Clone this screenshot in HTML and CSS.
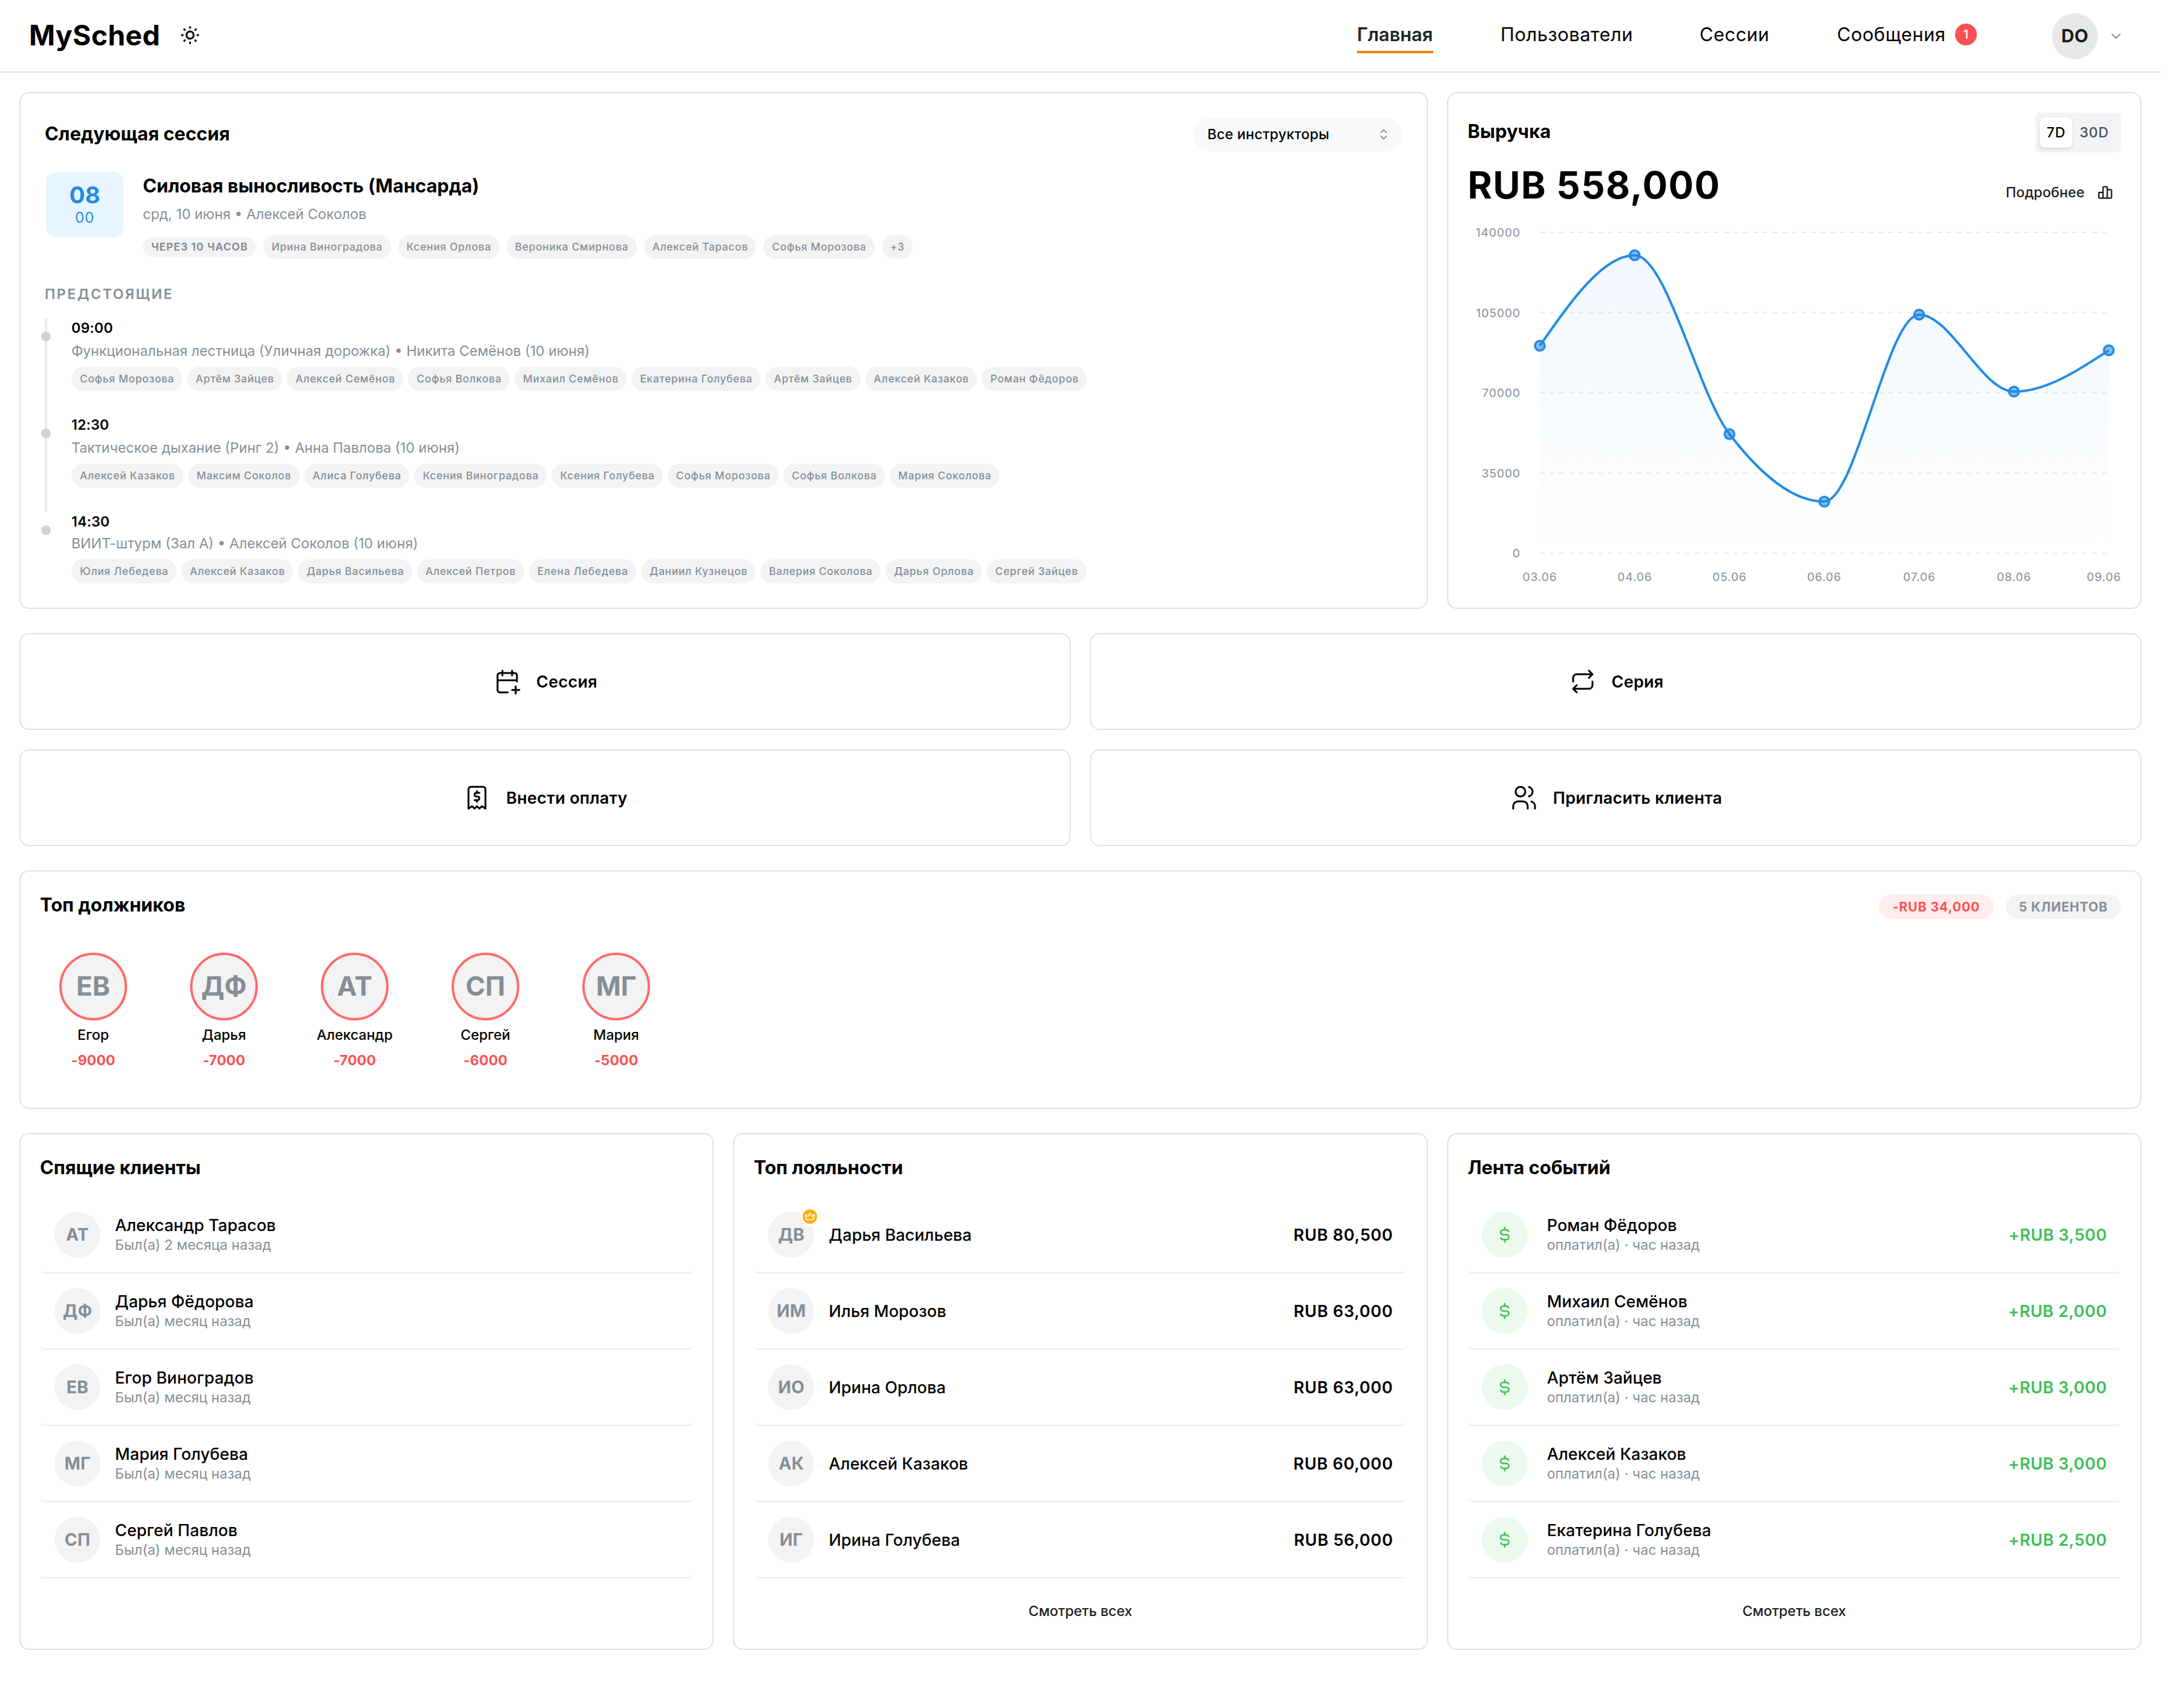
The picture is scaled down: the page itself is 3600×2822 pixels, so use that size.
FILE: index.html
```html
<!DOCTYPE html>
<html lang="ru">
<head>
<meta charset="utf-8">
<title>MySched</title>
<link rel="stylesheet" href="styles.css">
</head>
<body>
<div class="page">
  <header class="header">
    <div class="brand">
      <span class="logo">MySched</span>
      <svg class="icon sun" viewBox="0 0 24 24"><path d="M8 12a4 4 0 1 0 8 0a4 4 0 1 0 -8 0M3 12h1m8 -9v1m8 8h1m-9 8v1m-6.4 -15.4l.7 .7m12.1 -.7l-.7 .7m0 11.4l.7 .7m-12.1 -.7l-.7 .7"/></svg>
    </div>
    <nav class="nav">
      <a class="nav-item active">Главная</a>
      <a class="nav-item users">Пользователи</a>
      <a class="nav-item sessions">Сессии</a>
      <a class="nav-item messages">Сообщения <span class="count">1</span></a>
    </nav>
    <div class="account">
      <span class="account-avatar">DO</span>
      <svg class="chevron" viewBox="0 0 16 10"><path d="M1.5 1.5l6.5 6.5l6.5 -6.5"/></svg>
    </div>
  </header>

  <main class="main">
    <section class="card next">
      <div class="next-head">
        <h2 class="title">Следующая сессия</h2>
        <div class="select"><span>Все инструкторы</span>
          <svg class="selector" viewBox="0 0 12 18"><path d="M1.5 6l4.5 -4.5l4.5 4.5M1.5 12l4.5 4.5l4.5 -4.5"/></svg>
        </div>
      </div>
      <div class="session">
        <div class="tile"><span class="tile-hour">08</span><span class="tile-min">00</span></div>
        <div class="session-body">
          <h3 class="session-title">Силовая выносливость (Мансарда)</h3>
          <p class="meta session-meta">срд, 10 июня • Алексей Соколов</p>
          <div class="chips wide">
            <span class="chip soon">ЧЕРЕЗ 10 ЧАСОВ</span><span class="chip">Ирина Виноградова</span><span class="chip">Ксения Орлова</span><span class="chip">Вероника Смирнова</span><span class="chip">Алексей Тарасов</span><span class="chip">Софья Морозова</span><span class="chip">+3</span>
          </div>
        </div>
      </div>
      <h4 class="upcoming">ПРЕДСТОЯЩИЕ</h4>
      <ol class="timeline">
        <li class="event">
          <span class="rail"></span>
          <div>
            <p class="time">09:00</p>
            <p class="meta">Функциональная лестница (Уличная дорожка) • Никита Семёнов (10 июня)</p>
            <div class="chips">
              <span class="chip">Софья Морозова</span><span class="chip">Артём Зайцев</span><span class="chip">Алексей Семёнов</span><span class="chip">Софья Волкова</span><span class="chip">Михаил Семёнов</span><span class="chip">Екатерина Голубева</span><span class="chip">Артём Зайцев</span><span class="chip">Алексей Казаков</span><span class="chip">Роман Фёдоров</span>
            </div>
          </div>
        </li>
        <li class="event">
          <span class="rail"></span>
          <div>
            <p class="time">12:30</p>
            <p class="meta">Тактическое дыхание (Ринг 2) • Анна Павлова (10 июня)</p>
            <div class="chips">
              <span class="chip">Алексей Казаков</span><span class="chip">Максим Соколов</span><span class="chip">Алиса Голубева</span><span class="chip">Ксения Виноградова</span><span class="chip">Ксения Голубева</span><span class="chip">Софья Морозова</span><span class="chip">Софья Волкова</span><span class="chip">Мария Соколова</span>
            </div>
          </div>
        </li>
        <li class="event last">
          <span class="rail"></span>
          <div>
            <p class="time">14:30</p>
            <p class="meta">ВИИТ-штурм (Зал А) • Алексей Соколов (10 июня)</p>
            <div class="chips">
              <span class="chip">Юлия Лебедева</span><span class="chip">Алексей Казаков</span><span class="chip">Дарья Васильева</span><span class="chip">Алексей Петров</span><span class="chip">Елена Лебедева</span><span class="chip">Даниил Кузнецов</span><span class="chip">Валерия Соколова</span><span class="chip">Дарья Орлова</span><span class="chip">Сергей Зайцев</span>
            </div>
          </div>
        </li>
      </ol>
    </section>

    <section class="card revenue">
      <div class="revenue-head">
        <h2 class="title">Выручка</h2>
        <div class="segmented"><span class="segment on">7D</span><span class="segment">30D</span></div>
      </div>
      <div class="revenue-total">
        <strong class="sum">RUB 558,000</strong>
        <a class="more">Подробнее
          <svg class="icon bars" viewBox="0 0 24 24"><path d="M3 13a1 1 0 0 1 1 -1h4a1 1 0 0 1 1 1v6a1 1 0 0 1 -1 1h-4a1 1 0 0 1 -1 -1zM15 9a1 1 0 0 1 1 -1h4a1 1 0 0 1 1 1v10a1 1 0 0 1 -1 1h-4a1 1 0 0 1 -1 -1zM9 5a1 1 0 0 1 1 -1h4a1 1 0 0 1 1 1v14a1 1 0 0 1 -1 1h-4a1 1 0 0 1 -1 -1zM4 20h14"/></svg>
        </a>
      </div>
      <svg class="chart" viewBox="0 0 1080 608">
        <defs>
          <linearGradient id="area" x1="0" y1="0" x2="0" y2="1">
            <stop offset="0" stop-color="#228be6" stop-opacity=".065"/>
            <stop offset="1" stop-color="#228be6" stop-opacity="0"/>
          </linearGradient>
        </defs>
        <g class="grid-lines"><path d="M120 20H1060M120 152.5H1060M120 285H1060M120 417.5H1060M120 550H1060"/></g>
        <path fill="url(#area)" d="M120,207.25C172.2,132.5 224.4,57.7 276.67,57.7C328.9,57.7 381.1,285.3 433.33,353.2C485.6,421.1 537.8,464.8 590,464.8C642.2,464.8 694.4,155.9 746.67,155.9C798.9,155.9 851.1,283.1 903.33,283.1C955.6,283.1 1007.8,248.95 1060,214.8V550H120Z"/>
        <path class="line" d="M120,207.25C172.2,132.5 224.4,57.7 276.67,57.7C328.9,57.7 381.1,285.3 433.33,353.2C485.6,421.1 537.8,464.8 590,464.8C642.2,464.8 694.4,155.9 746.67,155.9C798.9,155.9 851.1,283.1 903.33,283.1C955.6,283.1 1007.8,248.95 1060,214.8"/>
        <g class="dots">
          <circle cx="120" cy="207.25" r="8"/><circle cx="276.67" cy="57.7" r="8"/><circle cx="433.33" cy="353.2" r="8"/><circle cx="590" cy="464.8" r="8"/><circle cx="746.67" cy="155.9" r="8"/><circle cx="903.33" cy="283.1" r="8"/><circle cx="1060" cy="214.8" r="8"/>
        </g>
        <g class="axis y-axis">
          <text x="88" y="27">140000</text><text x="88" y="159.5">105000</text><text x="88" y="292">70000</text><text x="88" y="424.5">35000</text><text x="88" y="557">0</text>
        </g>
        <g class="axis x-axis">
          <text x="120" y="596">03.06</text><text x="277" y="596">04.06</text><text x="433.5" y="596">05.06</text><text x="590" y="596">06.06</text><text x="747" y="596">07.06</text><text x="903.5" y="596">08.06</text><text x="1052" y="596">09.06</text>
        </g>
      </svg>
    </section>

    <section class="actions">
      <button class="card action"><svg class="icon action-icon" viewBox="0 0 24 24"><path d="M12.5 21h-6.5a2 2 0 0 1 -2 -2v-12a2 2 0 0 1 2 -2h12a2 2 0 0 1 2 2v5M16 3v4M8 3v4M4 11h16M16 19h6M19 16v6"/></svg><span>Сессия</span></button>
      <button class="card action"><svg class="icon action-icon" viewBox="0 0 24 24"><path d="M4 12v-3a3 3 0 0 1 3 -3h13m-3 -3l3 3l-3 3M20 12v3a3 3 0 0 1 -3 3h-13m3 3l-3 -3l3 -3"/></svg><span>Серия</span></button>
      <button class="card action"><svg class="icon action-icon" viewBox="0 0 24 24"><path d="M5 21v-16a2 2 0 0 1 2 -2h10a2 2 0 0 1 2 2v16l-3 -2l-2 2l-2 -2l-2 2l-2 -2l-3 2M14 8h-2.5a1.5 1.5 0 0 0 0 3h1a1.5 1.5 0 0 1 0 3h-2.5m2 0v1.5m0 -9v1.5"/></svg><span>Внести оплату</span></button>
      <button class="card action"><svg class="icon action-icon" viewBox="0 0 24 24"><path d="M5 7a4 4 0 1 0 8 0a4 4 0 1 0 -8 0M3 21v-2a4 4 0 0 1 4 -4h4a4 4 0 0 1 4 4v2M16 3.13a4 4 0 0 1 0 7.75M21 21v-2a4 4 0 0 0 -3 -3.85"/></svg><span>Пригласить клиента</span></button>
    </section>

    <section class="card debtors">
      <div class="debtors-head">
        <h2 class="title">Топ должников</h2>
        <div class="pills"><span class="pill red">-RUB 34,000</span><span class="pill">5 КЛИЕНТОВ</span></div>
      </div>
      <div class="debtor-list">
        <div class="debtor"><span class="ring">ЕВ</span><span class="debtor-name">Егор</span><span class="debt">-9000</span></div>
        <div class="debtor"><span class="ring">ДФ</span><span class="debtor-name">Дарья</span><span class="debt">-7000</span></div>
        <div class="debtor"><span class="ring">АТ</span><span class="debtor-name">Александр</span><span class="debt">-7000</span></div>
        <div class="debtor"><span class="ring">СП</span><span class="debtor-name">Сергей</span><span class="debt">-6000</span></div>
        <div class="debtor"><span class="ring">МГ</span><span class="debtor-name">Мария</span><span class="debt">-5000</span></div>
      </div>
    </section>

    <section class="card list">
      <h2 class="title">Спящие клиенты</h2>
      <ul class="rows">
        <li class="row"><span class="avatar">АТ</span><div class="who"><b>Александр Тарасов</b><small>Был(а) 2 месяца назад</small></div></li>
        <li class="row"><span class="avatar">ДФ</span><div class="who"><b>Дарья Фёдорова</b><small>Был(а) месяц назад</small></div></li>
        <li class="row"><span class="avatar">ЕВ</span><div class="who"><b>Егор Виноградов</b><small>Был(а) месяц назад</small></div></li>
        <li class="row"><span class="avatar">МГ</span><div class="who"><b>Мария Голубева</b><small>Был(а) месяц назад</small></div></li>
        <li class="row"><span class="avatar">СП</span><div class="who"><b>Сергей Павлов</b><small>Был(а) месяц назад</small></div></li>
      </ul>
    </section>

    <section class="card list loyal">
      <h2 class="title">Топ лояльности</h2>
      <ul class="rows">
        <li class="row"><span class="avatar">ДВ<span class="crown"><svg viewBox="0 0 24 24"><path d="M12 6l4 6l5 -4l-2 10h-14l-2 -10l5 4z"/></svg></span></span><b>Дарья Васильева</b><span class="amount">RUB 80,500</span></li>
        <li class="row"><span class="avatar">ИМ</span><b>Илья Морозов</b><span class="amount">RUB 63,000</span></li>
        <li class="row"><span class="avatar">ИО</span><b>Ирина Орлова</b><span class="amount">RUB 63,000</span></li>
        <li class="row"><span class="avatar">АК</span><b>Алексей Казаков</b><span class="amount">RUB 60,000</span></li>
        <li class="row"><span class="avatar">ИГ</span><b>Ирина Голубева</b><span class="amount">RUB 56,000</span></li>
      </ul>
      <a class="all">Смотреть всех</a>
    </section>

    <section class="card list feed">
      <h2 class="title">Лента событий</h2>
      <ul class="rows">
        <li class="row"><span class="avatar paid"><svg class="icon" viewBox="0 0 24 24"><path d="M16.7 8a3 3 0 0 0 -2.7 -2h-4a3 3 0 0 0 0 6h4a3 3 0 0 1 0 6h-4a3 3 0 0 1 -2.7 -2M12 3v3m0 12v3"/></svg></span><div class="who"><b>Роман Фёдоров</b><small>оплатил(а) · час назад</small></div><span class="amount">+RUB 3,500</span></li>
        <li class="row"><span class="avatar paid"><svg class="icon" viewBox="0 0 24 24"><path d="M16.7 8a3 3 0 0 0 -2.7 -2h-4a3 3 0 0 0 0 6h4a3 3 0 0 1 0 6h-4a3 3 0 0 1 -2.7 -2M12 3v3m0 12v3"/></svg></span><div class="who"><b>Михаил Семёнов</b><small>оплатил(а) · час назад</small></div><span class="amount">+RUB 2,000</span></li>
        <li class="row"><span class="avatar paid"><svg class="icon" viewBox="0 0 24 24"><path d="M16.7 8a3 3 0 0 0 -2.7 -2h-4a3 3 0 0 0 0 6h4a3 3 0 0 1 0 6h-4a3 3 0 0 1 -2.7 -2M12 3v3m0 12v3"/></svg></span><div class="who"><b>Артём Зайцев</b><small>оплатил(а) · час назад</small></div><span class="amount">+RUB 3,000</span></li>
        <li class="row"><span class="avatar paid"><svg class="icon" viewBox="0 0 24 24"><path d="M16.7 8a3 3 0 0 0 -2.7 -2h-4a3 3 0 0 0 0 6h4a3 3 0 0 1 0 6h-4a3 3 0 0 1 -2.7 -2M12 3v3m0 12v3"/></svg></span><div class="who"><b>Алексей Казаков</b><small>оплатил(а) · час назад</small></div><span class="amount">+RUB 3,000</span></li>
        <li class="row"><span class="avatar paid"><svg class="icon" viewBox="0 0 24 24"><path d="M16.7 8a3 3 0 0 0 -2.7 -2h-4a3 3 0 0 0 0 6h4a3 3 0 0 1 0 6h-4a3 3 0 0 1 -2.7 -2M12 3v3m0 12v3"/></svg></span><div class="who"><b>Екатерина Голубева</b><small>оплатил(а) · час назад</small></div><span class="amount">+RUB 2,500</span></li>
      </ul>
      <a class="all">Смотреть всех</a>
    </section>
  </main>
</div>
</body>
</html>
```
FILE: styles.css
```css
* { box-sizing: border-box; margin: 0; padding: 0; }

body {
  background: #fff;
  color: #000;
  font-family: Inter, "Noto Sans", sans-serif;
  font-size: 23.1px;
  line-height: 30px;
}

ul, ol { list-style: none; }
.page { width: 3570px; height: 2822px; }

.icon {
  display: block;
  flex: none;
  fill: none;
  stroke: currentColor;
  stroke-width: 2;
  stroke-linecap: round;
  stroke-linejoin: round;
}

/* Header */
.header {
  display: flex;
  align-items: center;
  height: 120px;
  padding: 0 66px 0 48px;
  border-bottom: 2px solid #dee2e6;
}
.brand { display: flex; align-items: center; gap: 30px; margin-right: auto; padding-bottom: 2px; }
.logo { width: 218px; font-size: 46.2px; font-weight: 700; line-height: 60px; letter-spacing: .008em; }
.sun { width: 36px; height: 36px; }
.nav { display: flex; gap: 111px; margin-bottom: 2px; }
.nav-item {
  display: flex;
  align-items: center;
  height: 60px;
  padding-top: 2px;
  border-bottom: 4px solid transparent;
  font-size: 30.8px;
  letter-spacing: .018em;
  white-space: nowrap;
}
.nav-item.active { width: 126px; border-color: #fd7e14; color: #212529; font-weight: 600; letter-spacing: -.002em; }
.users { width: 218px; }
.sessions { width: 116px; }
.messages { width: 231px; }
.count {
  width: 36px;
  height: 36px;
  margin: 0 0 0 auto;
  border-radius: 50%;
  background: #fa5252;
  color: #fff;
  font-size: 20px;
  font-weight: 500;
  line-height: 36px;
  text-align: center;
  letter-spacing: 0;
}
.account { display: flex; align-items: center; gap: 22px; margin: 2px 0 0 124px; }
.account-avatar {
  width: 76px;
  height: 76px;
  border-radius: 50%;
  background: #e7e9e9;
  color: #1a1c1e;
  font-size: 29.6px;
  font-weight: 700;
  line-height: 74px;
  text-align: center;
  letter-spacing: .01em;
}
.chevron { width: 16px; height: 10px; fill: none; stroke: #868e96; stroke-width: 2; stroke-linecap: round; stroke-linejoin: round; }

/* Page grid */
.main {
  display: grid;
  grid-template-columns: repeat(3, 1fr);
  grid-template-rows: 854px 352px 394px 854px;
  gap: 40px 32px;
  padding: 32px;
}
.card { min-width: 0; border: 2px solid #dee2e6; border-radius: 16px; background: #fff; }
.title { font-size: 30.8px; font-weight: 700; line-height: 46px; letter-spacing: 0; }
.meta { color: #868e96; white-space: nowrap; }

/* Next session */
.next { grid-column: span 2; padding: 40px; }
.next-head { display: flex; justify-content: space-between; align-items: center; height: 56px; }
.next-head .title { padding-bottom: 2px; }
.select {
  display: flex;
  align-items: center;
  justify-content: space-between;
  width: 346px;
  height: 56px;
  padding: 0 25px 0 24px;
  border-radius: 28px;
  background: #f8f9fa;
  font-weight: 500;
  letter-spacing: .0134em;
}
.selector { width: 12px; height: 18px; fill: none; stroke: #868e96; stroke-width: 1.8; stroke-linecap: round; stroke-linejoin: round; }
.session { display: flex; align-items: flex-start; gap: 32px; margin-top: 34px; padding-left: 2px; }
.tile {
  display: flex;
  flex-direction: column;
  align-items: center;
  width: 128px;
  height: 108px;
  padding-top: 16px;
  border-radius: 16px;
  background: #e7f5ff;
  color: #228be6;
}
.tile-hour { font-size: 38.5px; font-weight: 700; line-height: 44px; }
.tile-min { font-size: 24px; line-height: 32px; letter-spacing: .04em; }
.session-title { font-size: 30.8px; font-weight: 700; line-height: 45px; letter-spacing: -.001em; }
.session-meta { margin-top: 10px; }
.chips { display: flex; align-items: center; gap: 8px; margin-top: 11px; }
.chips.wide { gap: 12px; margin-top: 19px; }
.chip {
  height: 40px;
  padding: 0 13.4px 0 14px;
  border-radius: 20px;
  background: #f3f3f3;
  color: #868e96;
  font-size: 17.3px;
  font-weight: 500;
  line-height: 40px;
  letter-spacing: .0415em;
  white-space: nowrap;
}
.chip.soon { height: 32px; line-height: 32px; font-weight: 700; letter-spacing: .0616em; padding: 0 13px 0 14px; }
.upcoming { margin-top: 43px; color: #868e96; font-size: 23.1px; font-weight: 600; line-height: 30px; letter-spacing: .11em; }
.timeline { margin-top: 25px; }
.event { display: flex; gap: 40px; height: 160px; }
.rail { position: relative; width: 4px; background: #e9ecef; }
.rail::after {
  content: "";
  position: absolute;
  left: -6px;
  top: 22px;
  width: 16px;
  height: 16px;
  border-radius: 50%;
  background: #ced4d6;
}
.time { padding-top: 1px; font-weight: 600; letter-spacing: .007em; }
.event .meta { margin-top: 8px; }
.event.last { height: 118px; }
.event.last .rail { background: none; }
.event.last .meta { margin-top: 6px; }

/* Revenue */
.revenue { padding: 32px; }
.revenue-head { display: flex; justify-content: space-between; height: 66px; }
.revenue-head .title { line-height: 62px; letter-spacing: .005em; }
.segmented { display: flex; padding: 8px; border-radius: 8px; background: #f1f3f5; }
.segment { width: 72px; color: #495057; font-weight: 500; line-height: 50px; text-align: center; letter-spacing: .035em; }
.segment.on { width: 54px; border-radius: 8px; background: #fff; color: #000; box-shadow: 0 2px 4px rgba(0, 0, 0, .14); }
.revenue-total { display: flex; justify-content: space-between; height: 107px; }
.sum { font-size: 61.6px; font-weight: 700; line-height: 108px; letter-spacing: .0237em; }
.more {
  display: flex;
  align-items: center;
  gap: 20px;
  height: 40px;
  margin-top: 46px;
  padding-right: 12px;
  color: #1a1c1e;
  font-weight: 500;
  letter-spacing: .006em;
}
.bars { width: 28px; height: 28px; }
.chart { display: block; width: 1080px; height: 608px; margin: 5px 0 0 -1px; }
.grid-lines { stroke: #e9ecef; stroke-width: 2; stroke-dasharray: 8 8; }
.line { fill: none; stroke: #228be6; stroke-width: 4; }
.dots { fill: #228be6; fill-opacity: .55; stroke: #228be6; stroke-width: 3.6; }
.axis { fill: #868e96; font-size: 19.3px; letter-spacing: .043em; }
.y-axis { text-anchor: end; }
.x-axis { text-anchor: middle; }

/* Quick actions */
.actions { grid-column: span 3; display: grid; grid-template-columns: 1fr 1fr; grid-auto-rows: 160px; gap: 32px; }
.action {
  display: flex;
  align-items: center;
  justify-content: center;
  gap: 24px;
  color: #000;
  font: 600 27px/36px Inter, "Noto Sans", sans-serif;
  letter-spacing: .01em;
}
.action span { padding-top: 2px; }
.action-icon { width: 48px; height: 48px; stroke-width: 1.5; }

/* Debtors */
.debtors { grid-column: span 3; padding: 32px; }
.debtors-head { display: flex; justify-content: space-between; align-items: flex-start; height: 46px; }
.debtors-head .title { line-height: 46px; }
.pills { display: flex; gap: 20px; margin-top: 6px; }
.pill {
  width: 190px;
  height: 40px;
  border-radius: 20px;
  background: #f3f3f3;
  color: #868e96;
  font-size: 21.2px;
  font-weight: 700;
  line-height: 40px;
  text-align: center;
  letter-spacing: .04em;
}
.pill.red { background: #ffecec; color: #fa5252; }
.debtor-list { display: flex; gap: 40px; margin-top: 56px; }
.debtor { display: flex; flex-direction: column; align-items: center; width: 176px; }
.ring {
  width: 112px;
  height: 112px;
  border: 4px solid #ff6b6b;
  border-radius: 50%;
  background: #f3f3f3;
  color: #868e96;
  font-size: 44px;
  font-weight: 700;
  line-height: 103px;
  text-align: center;
}
.debtor-name { margin-top: 9px; font-weight: 500; }
.debt { margin-top: 12px; color: #fa5252; font-weight: 700; letter-spacing: .002em; }

/* Lists */
.list { display: flex; flex-direction: column; padding: 32px; }
.rows { margin-top: 26px; }
.row {
  display: flex;
  align-items: center;
  gap: 24px;
  height: 126px;
  padding: 0 24px;
  border-bottom: 2px solid #e9ecef;
  border-radius: 8px;
}
.row b { padding-top: 1px; font-size: 27px; font-weight: 500; line-height: 34px; letter-spacing: .003em; }
.who { display: flex; flex-direction: column; padding-bottom: 2px; }
.who small { color: #868e96; font-size: 23.1px; line-height: 30px; }
.avatar {
  position: relative;
  flex: none;
  width: 76px;
  height: 76px;
  border-radius: 50%;
  background: #f3f3f3;
  color: #868e96;
  font-size: 28.2px;
  font-weight: 700;
  line-height: 76px;
  text-align: center;
  letter-spacing: .01em;
}
.crown {
  position: absolute;
  left: 53px;
  top: -8px;
  width: 32px;
  height: 32px;
  border: 4px solid #fff;
  border-radius: 50%;
  background: #fdb012;
}
.crown svg { display: block; width: 20px; height: 20px; margin: 2px; fill: none; stroke: #fff; stroke-width: 1.8; stroke-linejoin: round; }
.amount { margin-left: auto; margin-right: -1px; padding-top: 1px; font-size: 27px; font-weight: 600; letter-spacing: .0265em; }
.feed .row { gap: 32px; }
.feed .avatar { margin-left: -1px; }
.feed .amount { color: #40c057; letter-spacing: .018em; }
.paid { display: flex; align-items: center; justify-content: center; background: #ebf9ee; color: #40c057; }
.paid .icon { width: 32px; height: 32px; }
.all { margin-top: 39px; color: #1a1c1e; font-weight: 500; text-align: center; }
```
